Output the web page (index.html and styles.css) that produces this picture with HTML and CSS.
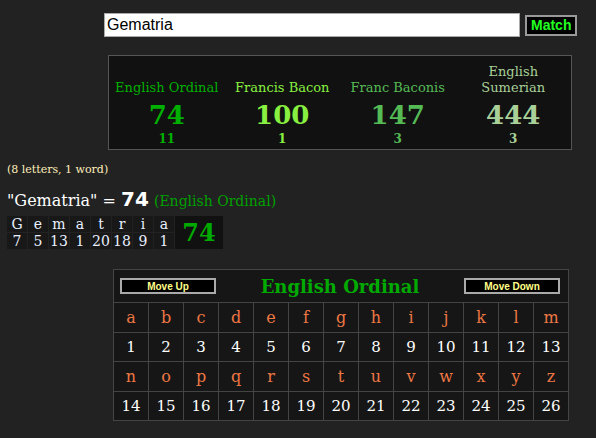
FILE: index.html
```html
<!DOCTYPE html>
<html lang="en">
  <head>
    <meta charset="UTF-8" />
    <title>Gematria</title>
    <link rel="stylesheet" href="styles.css">
  </head>
  <body>
    <form class="search">
      <input class="search-input" type="text" value="Gematria" />
      <button class="match-button" type="button">Match</button>
    </form>

    <div class="summary">
      <div class="cipher ordinal">
        <div class="cipher-name">English Ordinal</div>
        <div class="cipher-value">74</div>
        <div class="cipher-count">11</div>
      </div>
      <div class="cipher bacon">
        <div class="cipher-name">Francis Bacon</div>
        <div class="cipher-value">100</div>
        <div class="cipher-count">1</div>
      </div>
      <div class="cipher baconis">
        <div class="cipher-name">Franc Baconis</div>
        <div class="cipher-value">147</div>
        <div class="cipher-count">3</div>
      </div>
      <div class="cipher sumerian">
        <div class="cipher-name">English<br>Sumerian</div>
        <div class="cipher-value">444</div>
        <div class="cipher-count">3</div>
      </div>
    </div>

    <p class="word-info">(8 letters, 1 word)</p>
    <p class="equation">"Gematria" = <b class="eq-value">74</b> <span class="eq-cipher">(English Ordinal)</span></p>

    <table class="breakdown">
      <tr>
        <td>G</td><td>e</td><td>m</td><td>a</td><td>t</td><td>r</td><td>i</td><td>a</td>
        <td class="total" rowspan="2">74</td>
      </tr>
      <tr>
        <td>7</td><td>5</td><td>13</td><td>1</td><td>20</td><td>18</td><td>9</td><td>1</td>
      </tr>
    </table>

    <table class="chart">
      <tr>
        <th colspan="13">
          <div class="chart-head">
            <button class="move-button" type="button">Move Up</button>
            <span class="chart-title">English Ordinal</span>
            <button class="move-button" type="button">Move Down</button>
          </div>
        </th>
      </tr>
      <tr class="letters">
        <td>a</td><td>b</td><td>c</td><td>d</td><td>e</td><td>f</td><td>g</td><td>h</td><td>i</td><td>j</td><td>k</td><td>l</td><td>m</td>
      </tr>
      <tr class="numbers">
        <td>1</td><td>2</td><td>3</td><td>4</td><td>5</td><td>6</td><td>7</td><td>8</td><td>9</td><td>10</td><td>11</td><td>12</td><td>13</td>
      </tr>
      <tr class="letters">
        <td>n</td><td>o</td><td>p</td><td>q</td><td>r</td><td>s</td><td>t</td><td>u</td><td>v</td><td>w</td><td>x</td><td>y</td><td>z</td>
      </tr>
      <tr class="numbers">
        <td>14</td><td>15</td><td>16</td><td>17</td><td>18</td><td>19</td><td>20</td><td>21</td><td>22</td><td>23</td><td>24</td><td>25</td><td>26</td>
      </tr>
    </table>
  </body>
</html>
```

FILE: styles.css
```css
body {
  margin: 0;
  padding: 13px 0 0 7px;
  background-color: #222;
  color: #fff;
  font-family: "DejaVu Serif", serif;
}

.search {
  display: flex;
  align-items: center;
  margin: 0 0 0 97px;
}
.search-input {
  box-sizing: border-box;
  width: 416px;
  height: 24px;
  padding: 0 2px;
  border: 1px solid #aaa;
  font-family: "Liberation Sans", Arial, sans-serif;
  font-size: 16px;
  color: #000;
}
.match-button {
  box-sizing: border-box;
  height: 21px;
  margin-left: 5px;
  padding: 0 4px;
  background-color: #000;
  border: 2px solid #999;
  color: #22ff22;
  font-family: "Liberation Sans", Arial, sans-serif;
  font-weight: bold;
  font-size: 14px;
}

.summary {
  box-sizing: border-box;
  display: flex;
  align-items: flex-end;
  width: 464px;
  height: 95px;
  margin: 18px 0 0 101px;
  padding: 0 0 1px;
  background-color: #111;
  border: 1px solid #555;
  text-align: center;
}
.cipher {
  flex: 1;
}
.cipher-name {
  margin-bottom: 4px;
  font-size: 13px;
  line-height: 16px;
}
.cipher-value {
  font-size: 26px;
  font-weight: bold;
  line-height: 30px;
}
.cipher-count {
  font-size: 12px;
  font-weight: bold;
  line-height: 18px;
}
.ordinal { color: #00b000; }
.bacon { color: #88f040; }
.baconis { color: #55bb55; }
.sumerian { color: #a8d098; }

.word-info {
  margin: 13px 0 0;
  font-size: 11px;
  color: #ffeebb;
}
.equation {
  margin: 11px 0 4px;
  font-size: 16px;
}
.eq-value {
  font-family: "DejaVu Sans", sans-serif;
  font-size: 20px;
}
.eq-cipher {
  color: #00a000;
  font-size: 14px;
}

.breakdown {
  border-collapse: separate;
  border-spacing: 1px;
  margin-left: -1px;
}
.breakdown td {
  width: 20px;
  padding: 0;
  height: 16px;
  background-color: #181818;
  text-align: center;
  font-size: 14px;
  line-height: 16px;
  color: #e8f0ff;
}
.breakdown .total {
  width: 48px;
  background-color: #111;
  color: #00aa00;
  font-size: 24px;
  font-weight: bold;
}

.chart {
  margin: 19px 0 0 106px;
  border-collapse: collapse;
  background-color: #161616;
}
.chart th,
.chart td {
  border: 1px solid #444;
  padding: 0;
  text-align: center;
}
.chart td {
  width: 34px;
}
.chart-head {
  display: flex;
  align-items: center;
  justify-content: space-between;
  height: 32px;
  padding: 0 8px 0 6px;
}
.move-button {
  box-sizing: border-box;
  width: 96px;
  height: 16px;
  padding: 0;
  background-color: #000;
  border: 2px solid #aaa;
  color: #ffff88;
  font-family: "Liberation Sans", Arial, sans-serif;
  font-weight: bold;
  font-size: 10px;
}
.chart-title {
  color: #00aa00;
  font-size: 18px;
  font-weight: bold;
}
.letters td {
  height: 29px;
  color: #ee7744;
  font-size: 16px;
}
.numbers td {
  height: 28px;
  color: #fff;
  font-size: 15px;
}
```
